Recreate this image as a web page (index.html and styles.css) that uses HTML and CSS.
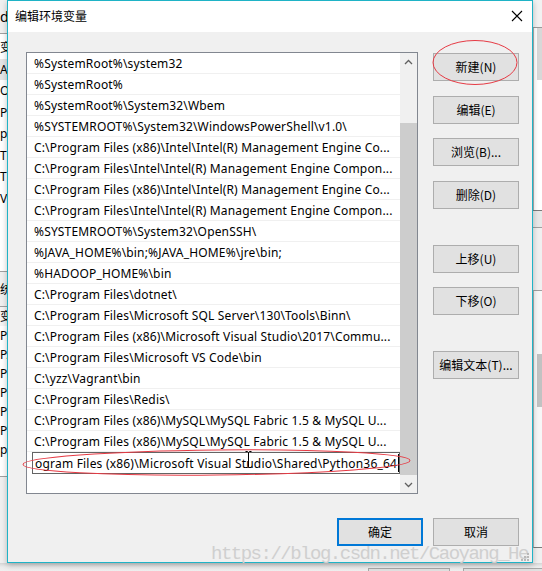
FILE: index.html
```html
<!DOCTYPE html>
<html lang="zh-CN">
<head>
<meta charset="utf-8">
<title>编辑环境变量</title>
<link rel="stylesheet" href="styles.css">
</head>
<body>
<div class="desk">
  <div class="bg-left">
    <div class="bgl-head">d</div>
    <div class="bgl-panel">
      <div class="bgl-row">变</div>
      <div class="bgl-row sel">A</div>
      <div class="bgl-row">O</div>
      <div class="bgl-row">Pa</div>
      <div class="bgl-row">py</div>
      <div class="bgl-row">TE</div>
      <div class="bgl-row">TM</div>
      <div class="bgl-row">VS</div>
    </div>
    <div class="bgl-label">统</div>
    <div class="bgl-panel2">
      <div class="bgl-row2 shift">变</div>
      <div class="bgl-row2">Pa</div>
      <div class="bgl-row2">PA</div>
      <div class="bgl-row2">PF</div>
      <div class="bgl-row2">PF</div>
      <div class="bgl-row2">PF</div>
      <div class="bgl-row2">PF</div>
      <div class="bgl-row2">ps</div>
    </div>
  </div>
  <div class="bg-right">
    <div class="bgr-top"></div>
    <div class="bgr-list1"><div class="bgr-thumb1"></div></div>
    <div class="bgr-band"></div>
    <div class="bgr-list2"><div class="bgr-thumb2"></div></div>
    <div class="bgr-band2"></div>
  </div>
  <div class="bg-bottom">
    <div class="bgb-btn b1"></div>
    <div class="bgb-btn b2"></div>
  </div>

  <div class="dialog">
    <div class="titlebar">
      <span class="title">编辑环境变量</span>
      <svg class="close" width="12" height="12" viewBox="0 0 12 12"><path d="M1 1 L11 11 M11 1 L1 11" stroke="#000" stroke-width="1.1" fill="none"/></svg>
    </div>
    <div class="body">
      <div class="main">
        <div class="listbox">
          <div class="rows">
            <div class="row">%SystemRoot%\system32</div>
            <div class="row">%SystemRoot%</div>
            <div class="row">%SystemRoot%\System32\Wbem</div>
            <div class="row">%SYSTEMROOT%\System32\WindowsPowerShell\v1.0\</div>
            <div class="row">C:\Program Files (x86)\Intel\Intel(R) Management Engine Co...</div>
            <div class="row">C:\Program Files\Intel\Intel(R) Management Engine Compon...</div>
            <div class="row">C:\Program Files (x86)\Intel\Intel(R) Management Engine Co...</div>
            <div class="row">C:\Program Files\Intel\Intel(R) Management Engine Compon...</div>
            <div class="row">%SYSTEMROOT%\System32\OpenSSH\</div>
            <div class="row">%JAVA_HOME%\bin;%JAVA_HOME%\jre\bin;</div>
            <div class="row">%HADOOP_HOME%\bin</div>
            <div class="row">C:\Program Files\dotnet\</div>
            <div class="row">C:\Program Files\Microsoft SQL Server\130\Tools\Binn\</div>
            <div class="row">C:\Program Files (x86)\Microsoft Visual Studio\2017\Commu...</div>
            <div class="row">C:\Program Files\Microsoft VS Code\bin</div>
            <div class="row">C:\yzz\Vagrant\bin</div>
            <div class="row">C:\Program Files\Redis\</div>
            <div class="row">C:\Program Files (x86)\MySQL\MySQL Fabric 1.5 &amp; MySQL U...</div>
            <div class="row">C:\Program Files (x86)\MySQL\MySQL Fabric 1.5 &amp; MySQL U...</div>
            <div class="row editrow"><div class="input">ogram Files (x86)\Microsoft Visual Studio\Shared\Python36_64<span class="caret"></span></div></div>
          </div>
          <div class="vscroll">
            <div class="arrow"><svg width="9" height="6" viewBox="0 0 9 6"><path d="M1 5 L4.5 1.5 L8 5" stroke="#606060" stroke-width="1.3" fill="none"/></svg></div>
            <div class="track"><div class="thumb"></div></div>
            <div class="arrow"><svg width="9" height="6" viewBox="0 0 9 6"><path d="M1 1 L4.5 4.5 L8 1" stroke="#606060" stroke-width="1.3" fill="none"/></svg></div>
          </div>
        </div>
        <div class="side">
          <button class="btn">新建(N)</button>
          <button class="btn g1">编辑(E)</button>
          <button class="btn">浏览(B)...</button>
          <button class="btn g1">删除(D)</button>
          <button class="btn sep">上移(U)</button>
          <button class="btn">下移(O)</button>
          <button class="btn sep">编辑文本(T)...</button>
        </div>
      </div>
      <div class="footer">
        <button class="btn default">确定</button>
        <button class="btn">取消</button>
      </div>
    </div>
    <div class="watermark">https://blog.csdn.net/Caoyang_He</div>
    <svg class="grip" width="8" height="8" viewBox="0 0 8 8">
      <rect x="6" y="0" width="2" height="2" fill="#b8b8b8"/>
      <rect x="3" y="3" width="2" height="2" fill="#b8b8b8"/>
      <rect x="6" y="3" width="2" height="2" fill="#b8b8b8"/>
      <rect x="0" y="6" width="2" height="2" fill="#b8b8b8"/>
      <rect x="3" y="6" width="2" height="2" fill="#b8b8b8"/>
      <rect x="6" y="6" width="2" height="2" fill="#b8b8b8"/>
    </svg>
  </div>

  <svg class="overlay" width="542" height="571" viewBox="0 0 542 571">
    <ellipse cx="475" cy="62.5" rx="42" ry="22" fill="none" stroke="#e63a44" stroke-width="1"/>
    <ellipse cx="216.5" cy="462.5" rx="193.5" ry="12.5" fill="none" stroke="#e63a44" stroke-width="1" transform="rotate(-0.6 216.5 462.5)"/>
    <path d="M245.5 451.5 H247.5 L248.5 452.5 L249.5 451.5 H251.5 M248.5 452.5 V466.5 M245.5 467.5 H247.5 L248.5 466.5 L249.5 467.5 H251.5" stroke="#000" stroke-width="1" fill="none"/>
  </svg>
</div>
</body>
</html>
```
FILE: styles.css
```css
* { box-sizing: border-box; }

html, body {
  margin: 0;
  padding: 0;
}

body {
  width: 542px;
  height: 571px;
  overflow: hidden;
  background: #f0f0f0;
  font-family: "Noto Sans", "Noto Sans CJK SC", sans-serif;
  font-size: 12px;
  color: #000;
}

.desk {
  position: relative;
  width: 542px;
  height: 571px;
  overflow: hidden;
  background: #f0f0f0;
}

/* ---- background window, left strip ---- */
.bg-left {
  position: absolute;
  left: 0;
  top: 0;
  width: 40px;
  height: 571px;
  font-family: "Noto Sans", "Noto Sans CJK SC", sans-serif;
  font-size: 12px;
}
.bgl-head {
  height: 34px;
  padding-top: 7px;
  font-size: 14px;
  line-height: 20px;
  border-bottom: 1px solid #a0a0a0;
}
.bgl-panel {
  height: 238px;
  background: #ffffff;
  padding-top: 3px;
  border-bottom: 1px solid #a0a0a0;
}
.bgl-row {
  height: 21.5px;
  line-height: 21px;
}
.bgl-row.sel { background: #e5e5e5; }
.bgl-label {
  height: 35px;
  line-height: 36px;
  border-bottom: 1px solid #a0a0a0;
}
.bgl-panel2 {
  height: 170px;
  background: #ffffff;
  border-bottom: 1px solid #a0a0a0;
}
.bgl-row2 {
  height: 19px;
  line-height: 19px;
}
.bgl-row2.shift { background: #f4f4f4; }

/* ---- background window, right strip ---- */
.bg-right {
  position: absolute;
  left: 533px;
  top: 0;
  width: 9px;
  height: 571px;
  background: #f0f0f0;
}
.bgr-top { height: 28px; background: #f2f2f2; border-bottom: 1px solid #9a9a9a; }
.bgr-list1 {
  height: 182px;
  background: #ffffff;
  border-left: 1px solid #b0b0b0;
}
.bgr-thumb1 { margin-left: 3px; width: 5px; height: 52px; background: #d8d8d8; }
.bgr-band { height: 18px; border-top: 1px solid #7a7a7a; border-bottom: 1px solid #a0a0a0; background: #e8e8e8; }
.bgr-list2 {
  height: 258px;
  margin-top: 62px;
  border-top: 1px solid #a0a0a0;
  border-bottom: 1px solid #7a7a7a;
  border-left: 1px solid #b0b0b0;
  background: #f7f7f7;
  padding-top: 63px;
}
.bgr-thumb2 { margin-left: 3px; width: 6px; height: 53px; background: #c2c2c2; }
.bgr-band2 { height: 27px; border-bottom: 1px solid #a0a0a0; }

/* ---- background window, bottom strip ---- */
.bg-bottom {
  position: absolute;
  left: 0;
  top: 563px;
  width: 542px;
  height: 8px;
  background: linear-gradient(#d6d6d6, #ececec 4px, #f0f0f0);
}
.bgb-btn {
  position: absolute;
  top: 5px;
  height: 10px;
  border: 1px solid #a8a8a8;
  background: #e1e1e1;
}
.bgb-btn.b1 { left: 368px; width: 82px; }
.bgb-btn.b2 { left: 463px; width: 82px; }

/* ---- dialog ---- */
.dialog {
  position: absolute;
  left: 7px;
  top: 0;
  width: 526px;
  height: 563px;
  border: 1px solid #1fb3c6;
  background: #f0f0f0;
  display: flex;
  flex-direction: column;
  box-shadow: 0 2px 6px rgba(0, 0, 0, 0.25);
}

.titlebar {
  height: 31px;
  flex: none;
  background: #ffffff;
  display: flex;
  align-items: center;
  justify-content: space-between;
  padding: 0 9px 1px 7px;
}
.title {
  font-family: "Noto Sans CJK SC", sans-serif;
  font-size: 12px;
  line-height: 16px;
  color: #000;
}
.close { display: block; }

.body {
  flex: 1;
  display: flex;
  flex-direction: column;
  padding: 20px 13px 0 18px;
}

.main {
  display: flex;
  gap: 15px;
}

.listbox {
  width: 392px;
  height: 442px;
  border: 1px solid #828790;
  background: #ffffff;
  display: flex;
}

.rows {
  flex: 1;
  min-width: 0;
  overflow: hidden;
}

.row {
  height: 21px;
  border-bottom: 1px solid #f0f0f0;
  padding: 2px 0 0 7px;
  line-height: 18px;
  font-family: "Noto Sans", sans-serif;
  font-size: 12px;
  letter-spacing: 0.16px;
  white-space: nowrap;
  overflow: hidden;
  color: #000;
}

.row.editrow {
  border-bottom: none;
  padding: 0 0 0 5px;
  height: 22px;
}
.input {
  width: 368px;
  height: 22px;
  border: 1px solid #646464;
  padding: 1px 0 0 2px;
  line-height: 19px;
  letter-spacing: 0.2px;
  white-space: nowrap;
  overflow: hidden;
  display: flex;
  align-items: flex-start;
}
.caret {
  display: inline-block;
  width: 1px;
  height: 18px;
  margin-left: 1px;
  background: #000;
  flex: none;
}

.vscroll {
  width: 17px;
  flex: none;
  background: #f0f0f0;
  display: flex;
  flex-direction: column;
}
.arrow {
  height: 17px;
  flex: none;
  display: flex;
  align-items: center;
  justify-content: center;
}
.arrow svg { display: block; }
.track {
  flex: 1;
  padding-top: 53px;
}
.thumb {
  height: 352px;
  background: #cdcdcd;
}

.side {
  display: flex;
  flex-direction: column;
  gap: 14px;
  padding-top: 1px;
}

.btn {
  width: 86px;
  height: 28px;
  margin: 0;
  padding: 0;
  border: 1px solid #adadad;
  background: #e1e1e1;
  font-family: "Noto Sans CJK SC", sans-serif;
  font-size: 12px;
  line-height: 16px;
  color: #000;
  display: flex;
  align-items: center;
  justify-content: center;
}
.btn.g1 { margin-top: 1px; }
.btn.sep { margin-top: 22px; }
.btn.default { border: 2px solid #0078d7; }

.footer {
  display: flex;
  justify-content: flex-end;
  gap: 10px;
  margin-top: 24px;
}

.watermark {
  position: absolute;
  left: 203px;
  top: 541px;
  font-family: "Liberation Mono", monospace;
  font-size: 19px;
  letter-spacing: -1.5px;
  line-height: 24px;
  color: #cfcfcf;
  white-space: nowrap;
}

.grip {
  position: absolute;
  right: 3px;
  bottom: 1px;
  display: block;
}

.overlay {
  position: absolute;
  left: 0;
  top: 0;
  pointer-events: none;
}
```
